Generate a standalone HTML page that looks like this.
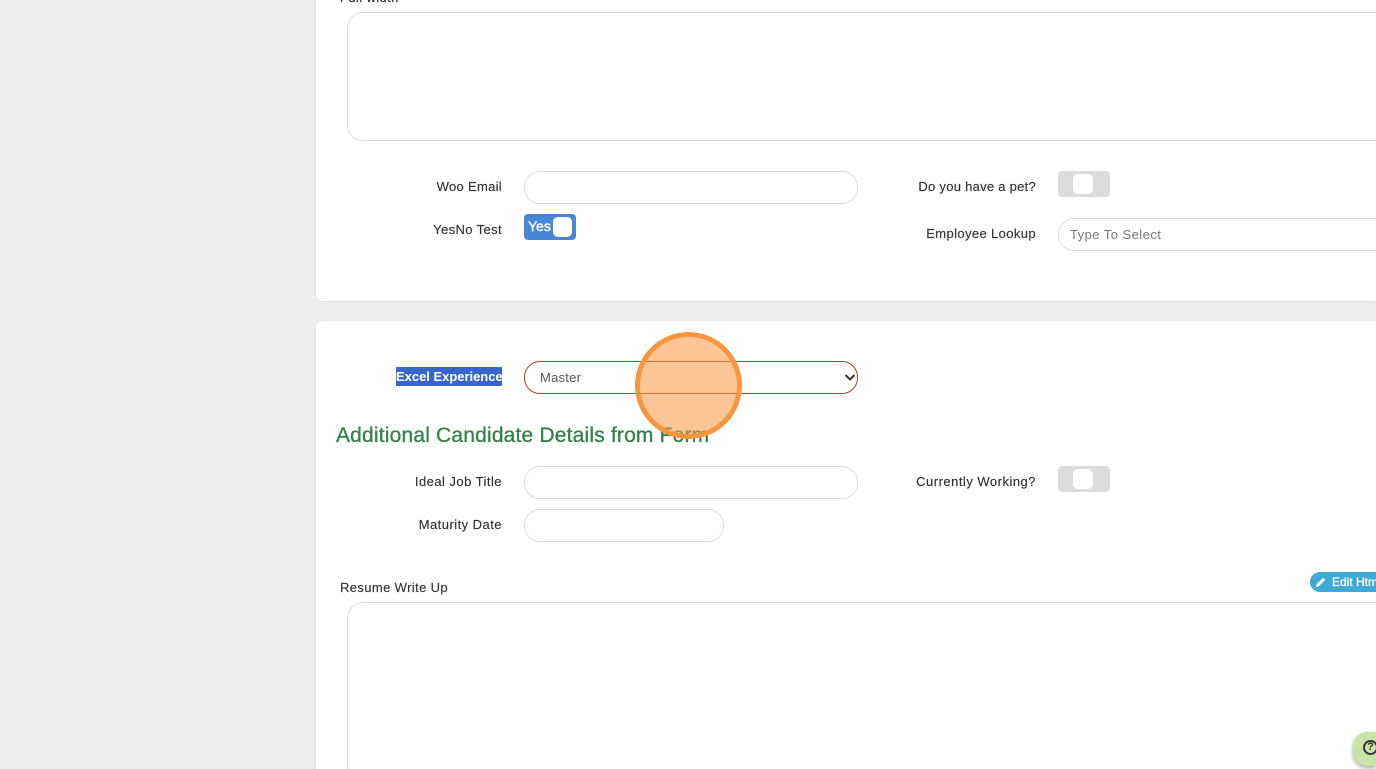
<!DOCTYPE html>
<html>
<head>
<meta charset="utf-8">
<style>
html,body{margin:0;padding:0;width:1376px;height:769px;overflow:hidden;background:#ededed;}
body{position:relative;font-family:"Liberation Sans",sans-serif;color:#333;}
.card{position:absolute;left:316px;width:1060px;background:#fff;border-radius:6px 0 0 6px;box-shadow:0 1px 2px rgba(0,0,0,.08);}
.box{position:absolute;box-sizing:border-box;background:#fff;border:1px solid #dcdcdc;}
.lab{position:absolute;font-size:13px;line-height:16px;color:#333;white-space:nowrap;letter-spacing:.38px;-webkit-text-stroke:.15px #333;}
.r{text-align:right;}
.tog{position:absolute;left:1058px;width:52px;height:26px;background:#dcdcdc;border-radius:4px;}
.tog i{position:absolute;left:15px;top:3px;width:20px;height:20px;background:#fff;border-radius:5px;}
#clip{position:absolute;left:0;top:0;width:1376px;height:769px;overflow:hidden;}
</style>
</head>
<body>
<div id="clip">
<div class="card" style="top:-40px;height:341px;"></div>
<div class="card" style="top:321px;height:448px;border-radius:6px 0 0 0;"></div>

<div class="lab" style="left:340px;top:-10px;">Full width</div>
<div class="box" style="left:347px;top:12px;width:1029px;height:129px;border-radius:16px 0 0 16px;border-right:0;"></div>

<div class="lab r" style="left:359px;top:179px;width:143px;letter-spacing:.3px;">Woo Email</div>
<div class="box" style="left:524px;top:171px;width:334px;height:33px;border-radius:16px;"></div>
<div class="lab r" style="left:359px;top:222px;width:143px;">YesNo Test</div>
<div style="position:absolute;left:524px;top:214px;width:52px;height:26px;background:#4a86d8;border-radius:4px;">
  <span style="position:absolute;left:4px;top:4px;font-size:14px;line-height:17px;color:#fff;-webkit-text-stroke:.4px #fff;">Yes</span>
  <i style="position:absolute;left:29px;top:3px;width:19px;height:20px;background:#fff;border-radius:5px;"></i>
</div>

<div class="lab r" style="left:859px;top:179px;width:177px;letter-spacing:.27px;">Do you have a pet?</div>
<div class="tog" style="top:171px;"><i></i></div>
<div class="lab r" style="left:859px;top:226px;width:177px;">Employee Lookup</div>
<div class="box" style="left:1058px;top:218px;width:318px;height:33px;border-radius:16px 0 0 16px;border-right:0;"></div>
<div class="lab" style="left:1070px;top:227px;color:#777;letter-spacing:.45px;-webkit-text-stroke:0;">Type To Select</div>

<div style="position:absolute;left:396px;top:367px;width:106px;height:19px;background:#3a66cc;"></div>
<div class="lab" style="left:396px;top:369px;color:#fff;font-weight:bold;letter-spacing:-.02px;-webkit-text-stroke:0;">Excel Experience</div>
<div class="box" style="left:524px;top:361px;width:334px;height:33px;border-radius:16px;border-color:#b2402f;"></div>
<div class="lab" style="left:540px;top:370px;color:#555;letter-spacing:.25px;-webkit-text-stroke:0;">Master</div>
<svg style="position:absolute;left:844px;top:373px;" width="12" height="9" viewBox="0 0 12 9"><path d="M1.5 2L6 6.5L10.5 2" fill="none" stroke="#333" stroke-width="2"/></svg>

<div style="position:absolute;left:336px;top:424px;font-size:21px;line-height:24px;color:#33834a;white-space:nowrap;letter-spacing:.18px;-webkit-text-stroke:.35px #33834a;">Additional Candidate Details from Form</div>

<div class="lab r" style="left:359px;top:474px;width:143px;letter-spacing:.46px;">Ideal Job Title</div>
<div class="box" style="left:524px;top:466px;width:334px;height:33px;border-radius:16px;"></div>
<div class="lab r" style="left:359px;top:517px;width:143px;letter-spacing:.46px;">Maturity Date</div>
<div class="box" style="left:524px;top:509px;width:200px;height:33px;border-radius:16px;"></div>
<div class="lab r" style="left:859px;top:474px;width:177px;letter-spacing:.49px;">Currently Working?</div>
<div class="tog" style="top:466px;"><i></i></div>

<div class="lab" style="left:340px;top:580px;">Resume Write Up</div>
<div class="box" style="left:347px;top:602px;width:1029px;height:300px;border-radius:16px 0 0 16px;border-right:0;"></div>

<div style="position:absolute;left:1310px;top:572px;width:66px;height:20px;background:#3eabd6;border-radius:10px 0 0 10px;overflow:hidden;">
  <svg style="position:absolute;left:5px;top:5px;" width="11" height="11" viewBox="0 0 11 11"><path d="M1 10L1.6 7.2L7.6 1.2Q8.2.7 8.8 1.2L9.8 2.2Q10.3 2.8 9.8 3.4L3.8 9.4Z" fill="#fff"/></svg>
  <span style="position:absolute;left:22px;top:3px;font-size:12px;line-height:14px;color:#fff;white-space:nowrap;-webkit-text-stroke:.3px #fff;">Edit Html</span>
</div>

<div style="position:absolute;left:635px;top:332px;width:107px;height:107px;box-sizing:border-box;border:5px solid #f79640;border-radius:50%;background:rgba(249,150,64,.55);"></div>

<div style="position:absolute;left:1353px;top:732px;width:23px;height:34px;background:#c9e4a9;border-radius:14px 0 0 14px;box-shadow:0 2px 4px rgba(0,0,0,.35);overflow:hidden;">
  <div style="position:absolute;left:10px;top:8px;width:15px;height:15px;box-sizing:border-box;border:2px solid #333;border-radius:50%;font-size:11px;line-height:11px;font-weight:bold;text-align:center;color:#333;">?</div>
</div>
</div>
</body>
</html>
